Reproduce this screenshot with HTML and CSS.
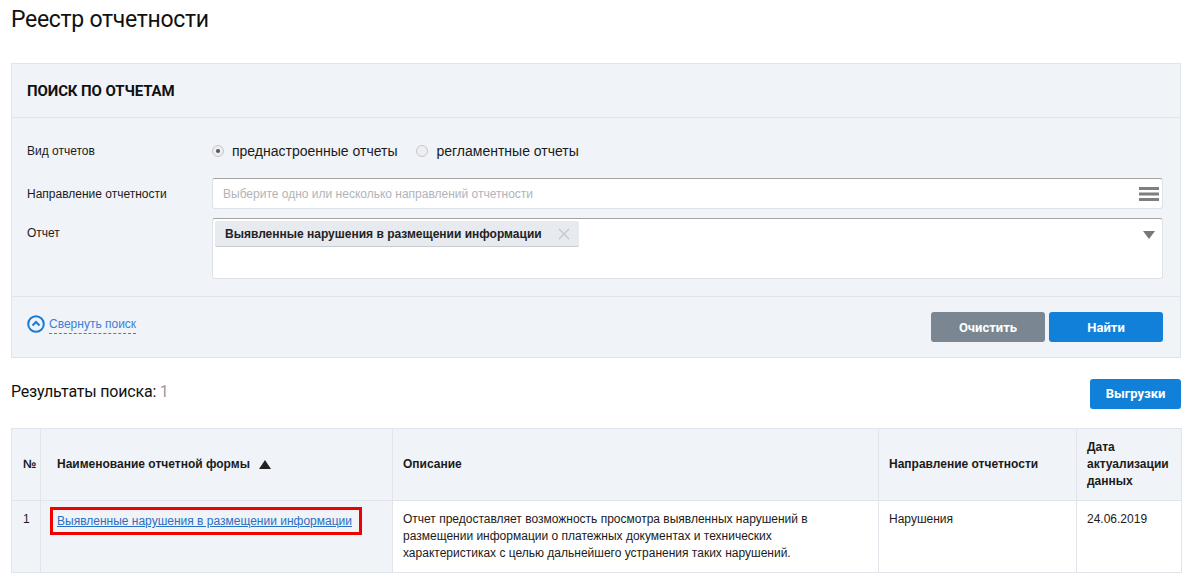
FILE: index.html
```html
<!DOCTYPE html>
<html lang="ru">
<head>
<meta charset="utf-8">
<title>Реестр отчетности</title>
<link rel="stylesheet" href="styles.css">
</head>
<body>
<div class="page">
  <h1 class="title">Реестр отчетности</h1>

  <section class="panel">
    <div class="panel-head">ПОИСК ПО ОТЧЕТАМ</div>
    <div class="panel-body">
      <div class="row row-radio">
        <div class="label">Вид отчетов</div>
        <div class="radios">
          <label class="radio"><span class="dot on"></span>преднастроенные отчеты</label>
          <label class="radio"><span class="dot"></span>регламентные отчеты</label>
        </div>
      </div>
      <div class="row">
        <div class="label">Направление отчетности</div>
        <div class="field field-single">
          <span class="placeholder">Выберите одно или несколько направлений отчетности</span>
          <svg class="burger" width="20" height="16" viewBox="0 0 20 16"><rect x="0" y="1" width="20" height="3" fill="#7f7f7f"/><rect x="0" y="6.5" width="20" height="3" fill="#7f7f7f"/><rect x="0" y="12" width="20" height="3" fill="#7f7f7f"/></svg>
        </div>
      </div>
      <div class="row row-top">
        <div class="label label-top">Отчет</div>
        <div class="field field-multi">
          <span class="tag">Выявленные нарушения в размещении информации
            <svg class="tag-x" width="12" height="12" viewBox="0 0 12 12"><path d="M1 1L11 11M11 1L1 11" stroke="#c3c8cf" stroke-width="1.3"/></svg>
          </span>
          <svg class="caret" width="12" height="8" viewBox="0 0 12 8"><path d="M0 0H12L6 8Z" fill="#777"/></svg>
        </div>
      </div>
    </div>
    <div class="panel-foot">
      <a class="collapse" href="#">
        <svg width="18" height="18" viewBox="0 0 18 18"><circle cx="9" cy="9" r="7.8" fill="none" stroke="#1a7bd6" stroke-width="2"/><path d="M5.5 10.5L9 7L12.5 10.5" fill="none" stroke="#1a7bd6" stroke-width="2"/></svg>
        <span class="collapse-text">Свернуть поиск</span>
      </a>
      <div class="buttons">
        <button class="btn btn-gray">Очистить</button>
        <button class="btn btn-blue">Найти</button>
      </div>
    </div>
  </section>

  <div class="results-bar">
    <div class="results">Результаты поиска: <span class="count">1</span></div>
    <button class="btn btn-blue btn-export">Выгрузки</button>
  </div>

  <table class="grid">
    <thead>
      <tr>
        <th class="c-num">№</th>
        <th class="c-name">Наименование отчетной формы <svg class="sort" width="12" height="9" viewBox="0 0 12 9"><path d="M6 0L12 9H0Z" fill="#222"/></svg></th>
        <th class="c-desc">Описание</th>
        <th class="c-dir">Направление отчетности</th>
        <th class="c-date">Дата актуализации данных</th>
      </tr>
    </thead>
    <tbody>
      <tr>
        <td class="c-num shade">1</td>
        <td class="c-name shade"><span class="mark"><a href="#" class="link">Выявленные нарушения в размещении информации </a></span></td>
        <td class="c-desc">Отчет предоставляет возможность просмотра выявленных нарушений в размещении информации о платежных документах и технических характеристиках с целью дальнейшего устранения таких нарушений.</td>
        <td class="c-dir">Нарушения</td>
        <td class="c-date">24.06.2019</td>
      </tr>
    </tbody>
  </table>
</div>
</body>
</html>
```

FILE: styles.css
```css
* { box-sizing: border-box; }
html, body { margin: 0; padding: 0; background: #fff; }
body {
  font-family: "Liberation Sans", Arial, sans-serif;
  font-size: 12px;
  color: #1b1b1b;
}
.page { padding: 0 11px; width: 1192px; }

.title {
  font-family: Roboto, "Liberation Sans", sans-serif;
  font-weight: 400;
  font-size: 23px;
  line-height: 28px;
  letter-spacing: -0.3px;
  margin: 0;
  padding-top: 6px;
  height: 63px;
  color: #111;
}

.panel {
  background: #f0f3f8;
  border: 1px solid #e1e5eb;
}
.panel-head {
  height: 54px;
  padding-left: 15px;
  padding-top: 1px;
  display: flex;
  align-items: center;
  font-family: Roboto, "Liberation Sans", sans-serif;
  font-weight: 700;
  font-size: 15px;
  letter-spacing: -0.1px;
  color: #111;
  border-bottom: 1px solid #e1e5eb;
}
.panel-body {
  padding: 23px 17px 17px 15px;
  border-bottom: 1px solid #e1e5eb;
}
.row { display: flex; align-items: center; margin-bottom: 9px; }
.row:last-child { margin-bottom: 0; }
.row-radio { height: 20px; margin-bottom: 17px; }
.row-top { align-items: flex-start; }
.label { width: 185px; flex: none; color: #1b1b1b; font-size: 12px; }
.label-top { padding-top: 8px; }

.radios { display: flex; gap: 19px; font-size: 14px; }
.radio { display: flex; align-items: center; gap: 8px; color: #1b1b1b; }
.dot {
  width: 12px; height: 12px; border-radius: 50%;
  border: 1px solid #c3c6cb;
  background: #eceef1;
  position: relative;
}
.dot.on::after {
  content: ""; position: absolute; left: 3px; top: 3px;
  width: 4px; height: 4px; border-radius: 50%; background: #555;
}

.field {
  flex: 1;
  background: #fff;
  border: 1px solid #dde2e8;
  border-top: 1px solid #a3a3a3;
  border-radius: 3px;
}
.field-single {
  height: 31px;
  display: flex;
  align-items: center;
  justify-content: space-between;
  padding: 0 3px 0 10px;
}
.placeholder { color: #b0b4ba; font-size: 12px; }
.field-multi {
  height: 61px;
  display: flex;
  align-items: flex-start;
  justify-content: space-between;
  padding: 2px 7px 0 2px;
}
.tag {
  display: inline-flex;
  align-items: center;
  height: 26px;
  padding: 0 9px 0 10px;
  gap: 16px;
  background: #e7eaef;
  border-bottom: 1px solid #c9ced5;
  border-radius: 2px;
  font-weight: 700;
  font-size: 12px;
  color: #222;
}
.caret { margin-top: 10px; }

.panel-foot {
  height: 60px;
  padding: 0 17px 0 15px;
  display: flex;
  align-items: center;
  justify-content: space-between;
}
.collapse {
  display: flex; align-items: center; gap: 4px;
  text-decoration: none;
  margin-top: -6px;
}
.collapse-text {
  color: #3d7fd6;
  font-size: 12px;
  padding-bottom: 2px;
  border-bottom: 1px dashed #3d7fd6;
  margin-top: 2px;
}
.buttons { display: flex; gap: 4px; }
.btn {
  border: none;
  border-radius: 3px;
  height: 30px;
  width: 114px;
  color: #fff;
  font-family: Roboto, "Liberation Sans", sans-serif;
  font-weight: 700;
  font-size: 13px;
  cursor: pointer;
}
.btn-gray { background: #7a8691; }
.btn-blue { background: #1180d9; }

.results-bar {
  height: 70px;
  display: flex;
  align-items: center;
  justify-content: space-between;
  padding-top: 1px;
}
.results {
  font-family: Roboto, "Liberation Sans", sans-serif;
  font-size: 16px;
  letter-spacing: -0.2px;
  color: #111;
  margin-top: -4px;
}
.count { color: #999; }
.btn-export { width: 91px; }

.grid {
  width: 100%;
  border-collapse: collapse;
  border: 1px solid #e1e5eb;
  table-layout: fixed;
}
.grid th, .grid td {
  border: 1px solid #e1e5eb;
  padding: 0 10px;
  text-align: left;
}
.grid th {
  background: #f0f3f8;
  font-weight: 700;
  font-size: 12px;
  height: 72px;
  line-height: 17px;
  color: #1b1b1b;
}
.grid td {
  vertical-align: top;
  height: 72px;
  padding-top: 10px;
  line-height: 17px;
  font-size: 12px;
  color: #1b1b1b;
}
.grid .c-num { width: 29px; padding-left: 11px; padding-right: 0; }
.grid .c-name { width: 352px; padding-left: 16px; }
.grid td.c-name { padding-left: 9px; padding-top: 6px; }
.grid .c-desc { width: 486px; }
.grid .c-dir { width: 198px; }
.grid .c-date { width: 105px; }
.grid td.c-desc, .grid td.c-dir, .grid td.c-date { padding-top: 10px; }
.grid .shade { background: #f0f3f8; }
.sort { margin-left: 6px; vertical-align: -1px; }

.mark {
  display: inline-block;
  border: 3px solid #ee0000;
  padding: 3px 7px 2px 4px;
  background: #f0f3f8;
}
.link {
  color: #2a6fc4;
  text-decoration: underline;
  font-size: 12px;
}
```
